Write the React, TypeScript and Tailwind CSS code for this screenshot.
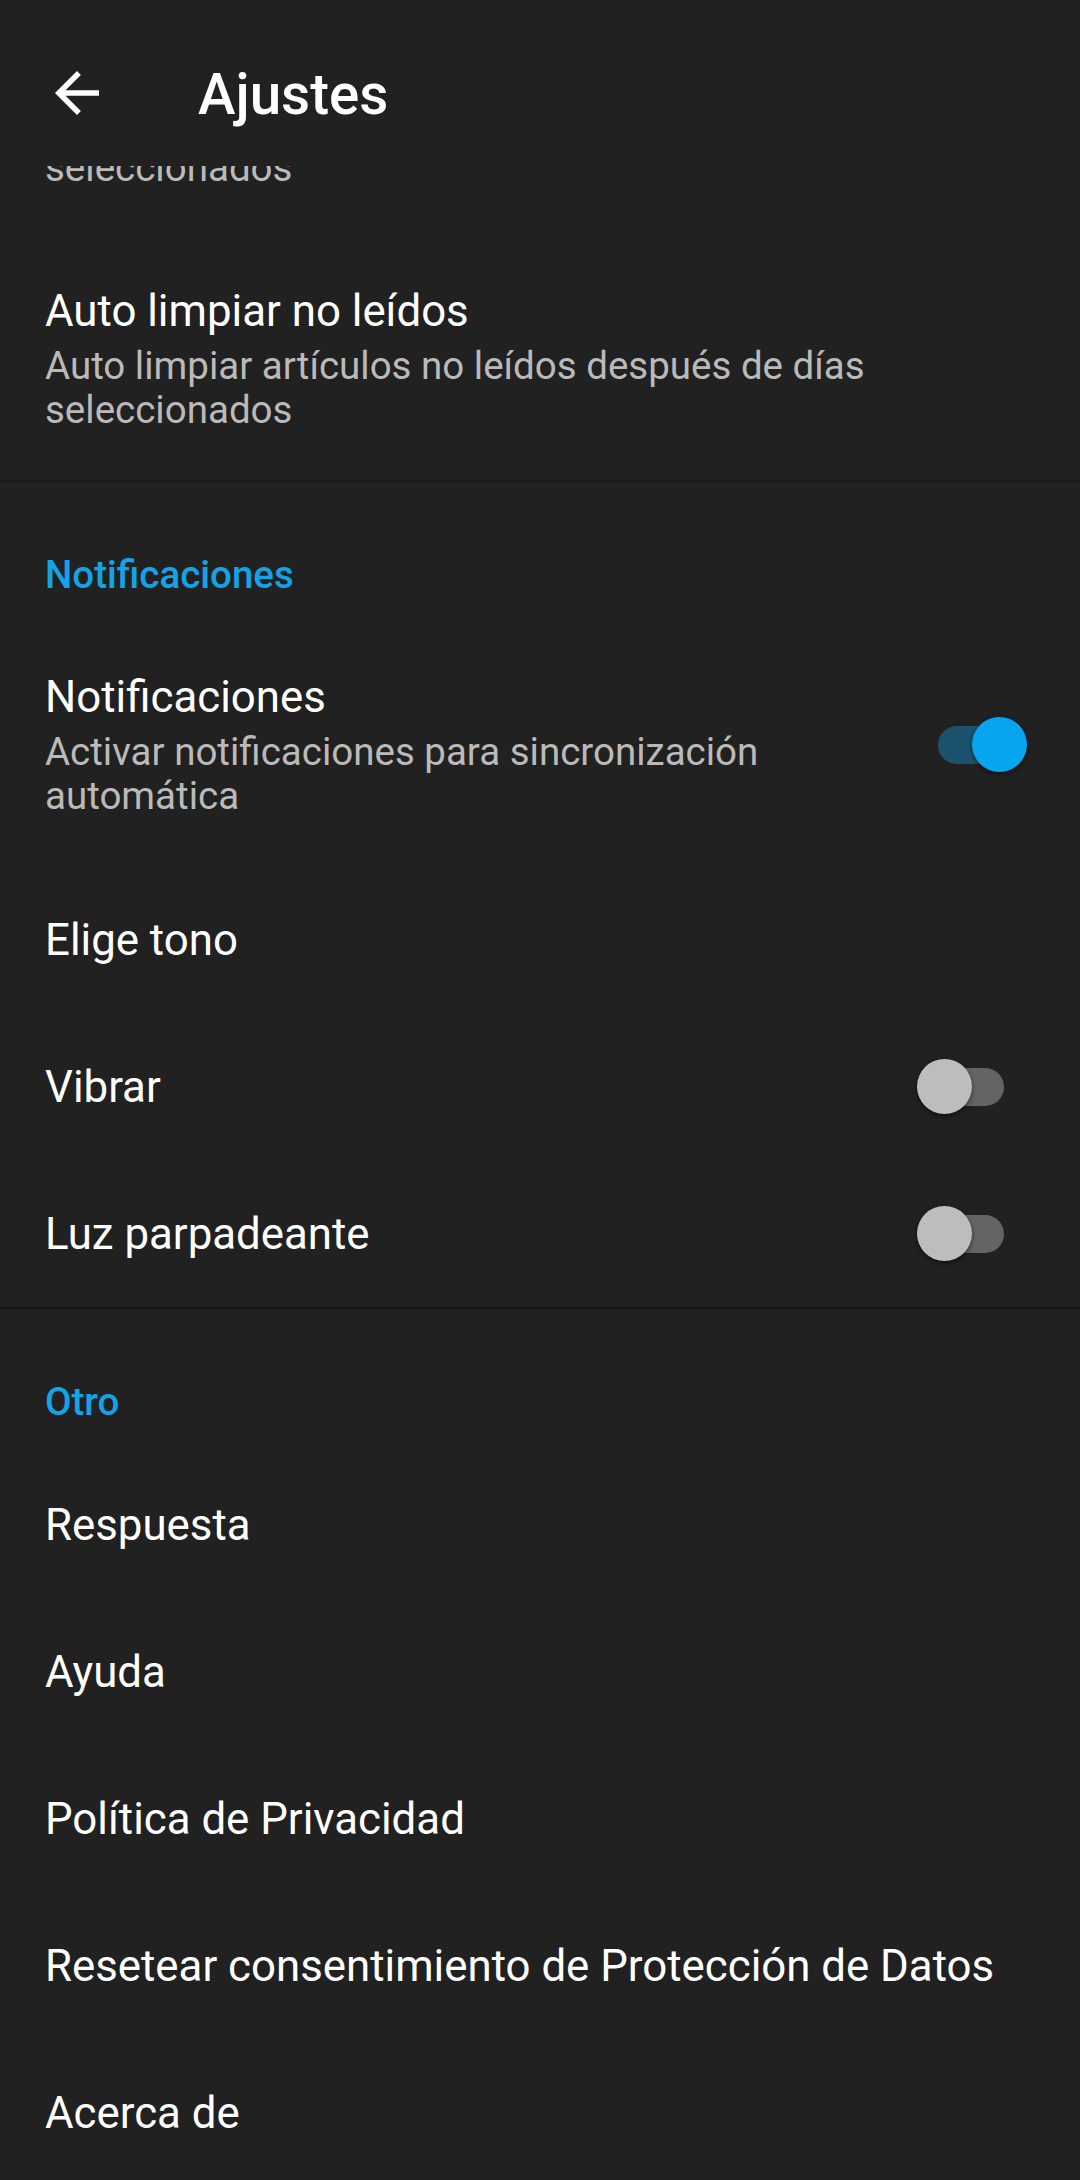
import React from 'react';

const font = { fontFamily: 'Roboto, "Noto Sans", sans-serif' };

const Toggle = ({ on }: { on: boolean }) => (
  <div className={on ? 'relative h-[38px] w-[66px] rounded-full bg-[#1c526d]' : 'relative h-[38px] w-[66px] rounded-full bg-[#646464]'}>
    <div
      className={
        on
          ? 'absolute top-[-8.5px] left-[34px] h-[55px] w-[55px] rounded-full bg-[#06a5ef] shadow-[0_2px_4px_rgba(0,0,0,0.55)]'
          : 'absolute top-[-8.5px] left-[-21px] h-[55px] w-[55px] rounded-full bg-[#bdbdbd] shadow-[0_2px_4px_rgba(0,0,0,0.55)]'
      }
    />
  </div>
);

const Row = ({ title, subtitle, toggle }: { title: string; subtitle?: string; toggle?: boolean }) => {
  const hasToggle = toggle !== undefined;
  if (!subtitle) {
    return (
      <div className="flex h-[147px] items-center pl-[45px] pr-[76px]">
        <div className="flex-1 text-[43.8px] leading-[52px] text-white">{title}</div>
        {hasToggle && <Toggle on={!!toggle} />}
      </div>
    );
  }
  return (
    <div className="flex items-center pl-[45px] pr-[76px] pt-[47px] pb-[48px]">
      <div className={hasToggle ? 'flex-1 pr-[40px]' : 'flex-1'}>
        <div className="text-[43.8px] leading-[52px] text-white">{title}</div>
        <div className="mt-[7px] text-[38.5px] leading-[44px] text-[#bababa]">{subtitle}</div>
      </div>
      {hasToggle && <Toggle on={!!toggle} />}
    </div>
  );
};

const SectionHeader = ({ label }: { label: string }) => (
  <div className="pl-[45px] pt-[71px] pb-[27px] text-[38.5px] font-medium leading-[44px] text-[#13a3e6]">{label}</div>
);

const Divider = () => <div className="h-[2px] bg-[#1a1a1a]" />;

export default function App() {
  return (
    <div className="flex h-[2180px] w-[1080px] flex-col overflow-hidden bg-[#212121]" style={font}>
      <header className="relative z-10 flex h-[166px] shrink-0 items-start bg-[#212121] pl-[44px] pt-[60px]">
        <svg viewBox="0 0 24 24" className="h-[66px] w-[66px]" fill="#ffffff">
          <path d="M20 11H7.83l5.59-5.59L12 4l-8 8 8 8 1.41-1.41L7.83 13H20v-2z" />
        </svg>
        <h1 className="ml-[88px] mt-[3px] text-[56.5px] font-medium leading-[64px] text-white">Ajustes</h1>
      </header>

      <main className="flex-1 overflow-hidden">
        <div className="-mt-[170px]">
          <Row title="Auto limpiar leídos" subtitle="Auto limpiar artículos leídos después de días seleccionados" />
        </div>
        <Row title="Auto limpiar no leídos" subtitle="Auto limpiar artículos no leídos después de días seleccionados" />
        <Divider />

        <SectionHeader label="Notificaciones" />
        <Row title="Notificaciones" subtitle="Activar notificaciones para sincronización automática" toggle={true} />
        <Row title="Elige tono" />
        <Row title="Vibrar" toggle={false} />
        <Row title="Luz parpadeante" toggle={false} />
        <Divider />

        <SectionHeader label="Otro" />
        <Row title="Respuesta" />
        <Row title="Ayuda" />
        <Row title="Política de Privacidad" />
        <Row title="Resetear consentimiento de Protección de Datos" />
        <Row title="Acerca de" />
      </main>
    </div>
  );
}
